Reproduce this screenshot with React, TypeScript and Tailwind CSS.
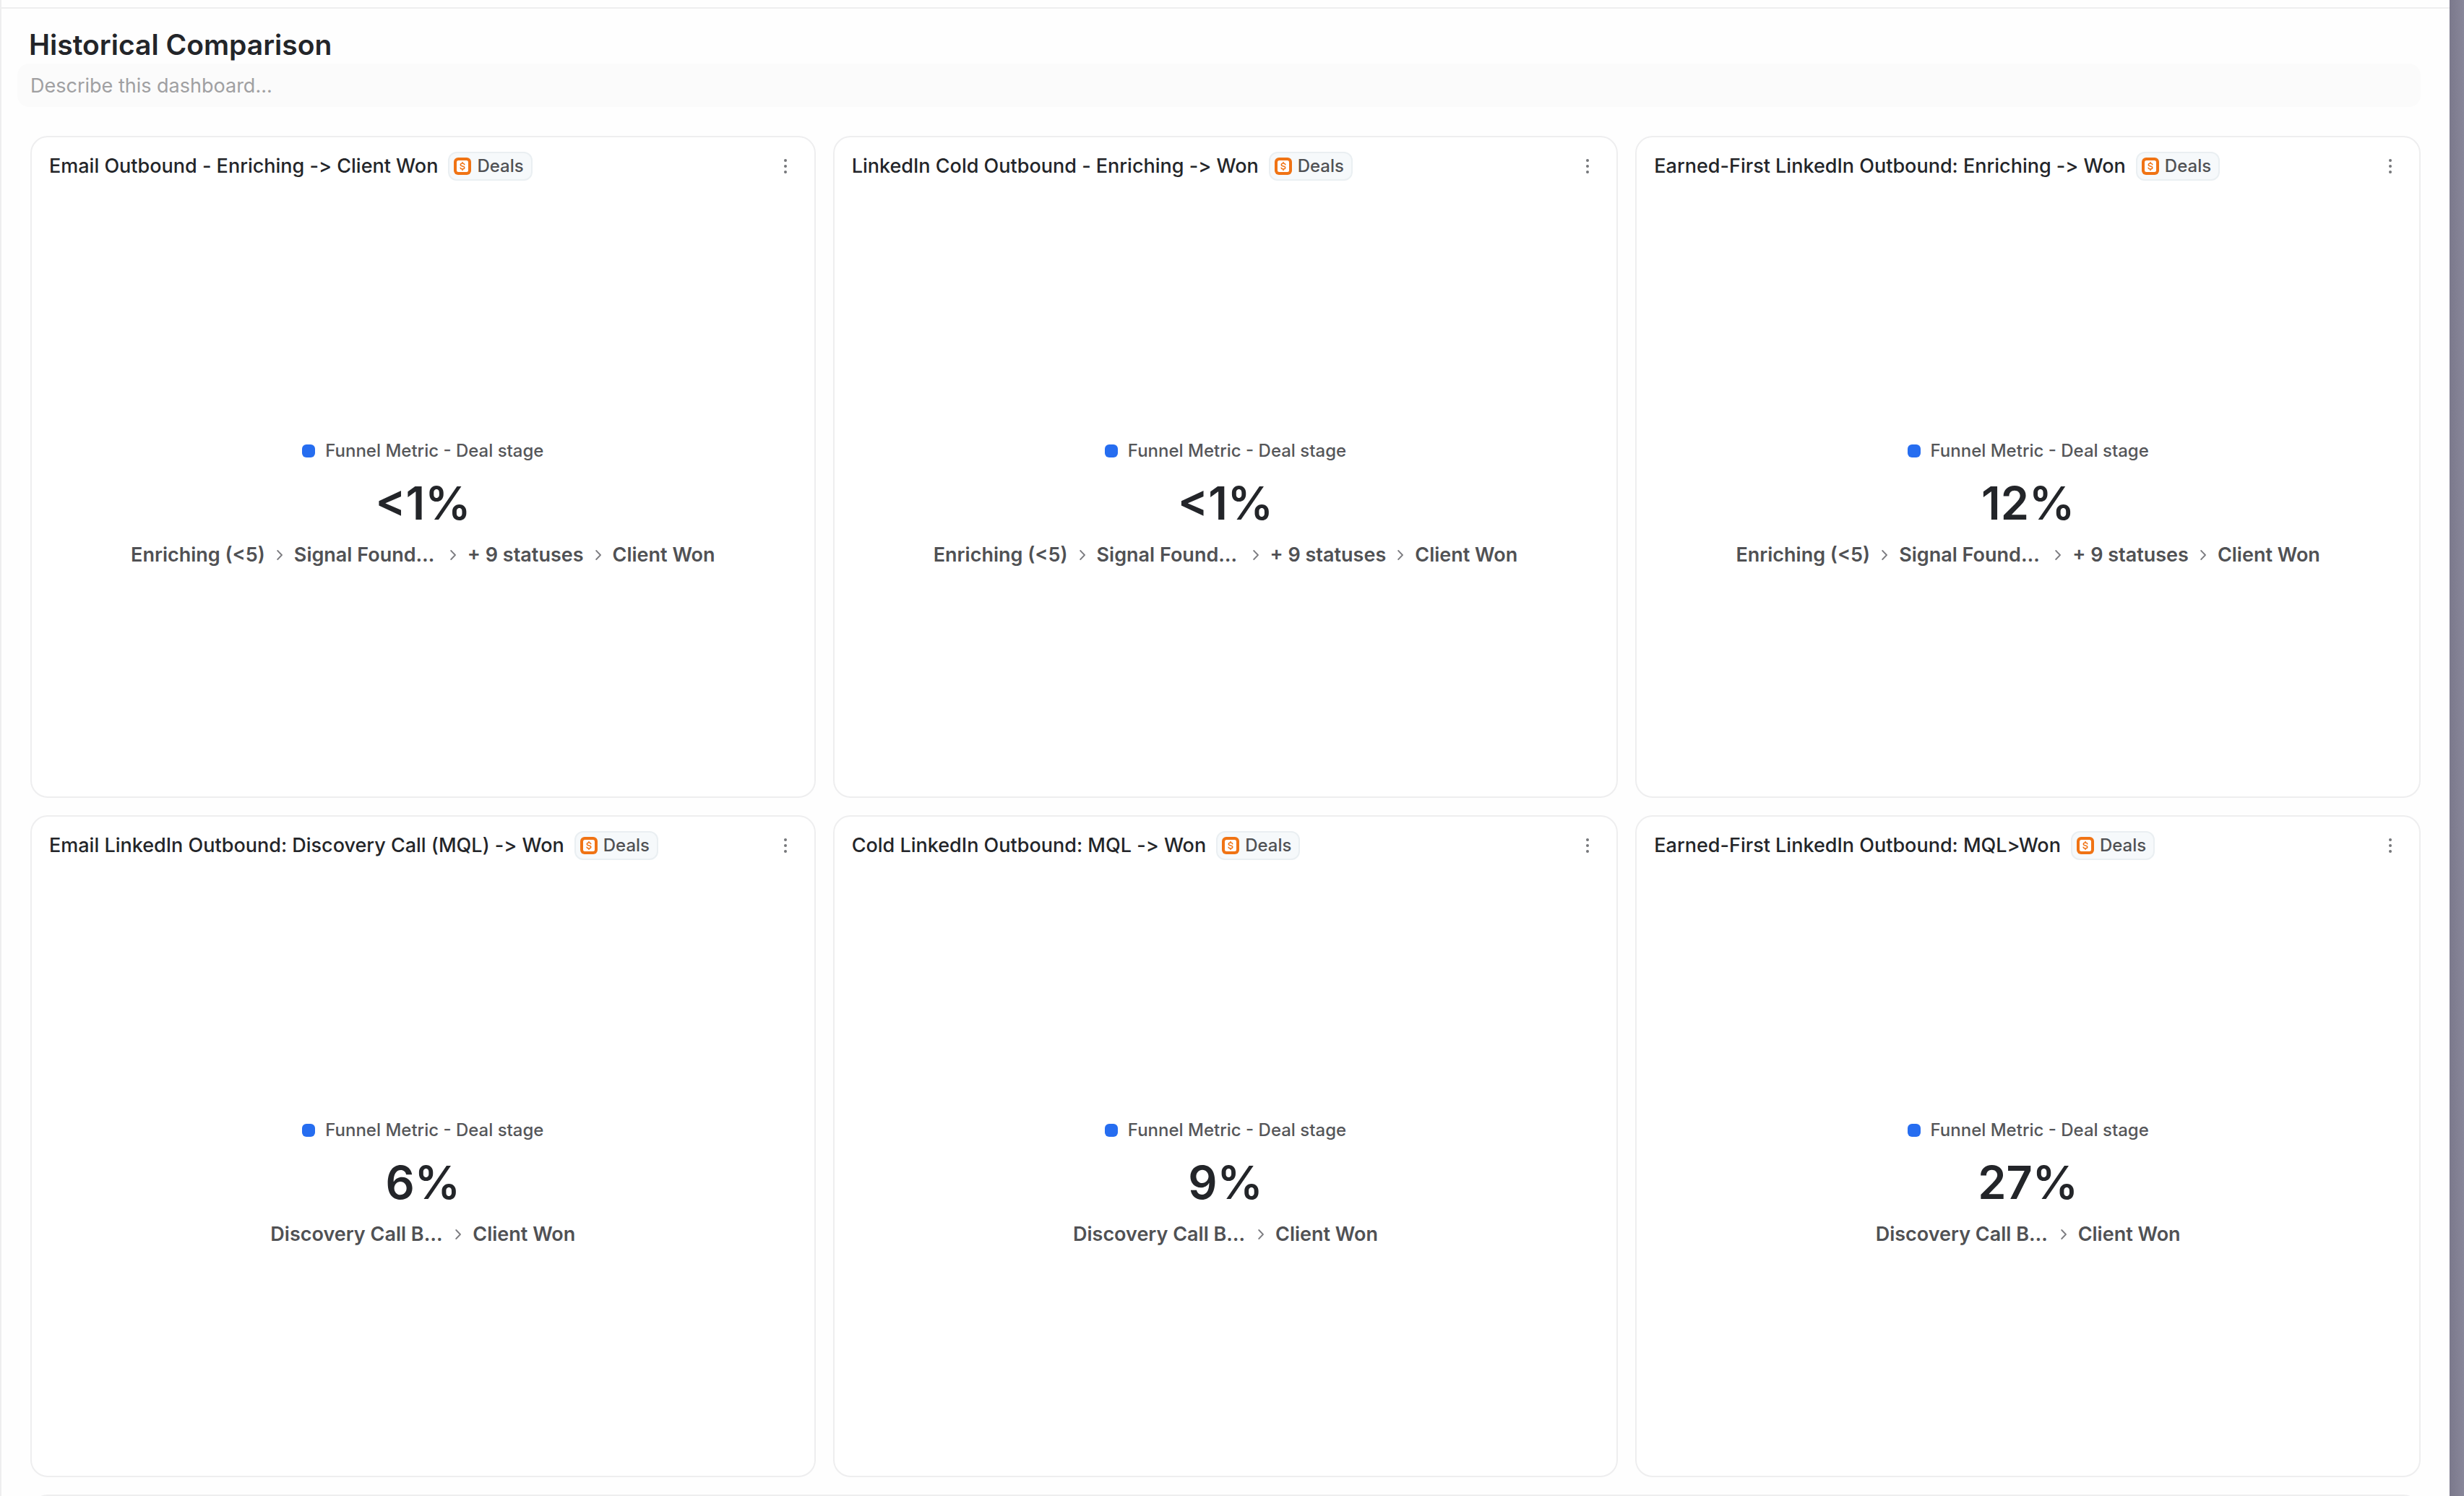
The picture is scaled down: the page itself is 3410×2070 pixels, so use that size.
import { useState } from "react";

type Widget = {
  title: string;
  value: string;
  steps: string[];
};

const fullFunnel = ["Enriching (<5)", "Signal Found…", "+ 9 statuses", "Client Won"];
const callFunnel = ["Discovery Call B…", "Client Won"];

const widgets: Widget[] = [
  { title: "Email Outbound - Enriching -> Client Won", value: "<1%", steps: fullFunnel },
  { title: "LinkedIn Cold Outbound - Enriching -> Won", value: "<1%", steps: fullFunnel },
  { title: "Earned-First LinkedIn Outbound: Enriching -> Won", value: "12%", steps: fullFunnel },
  { title: "Email LinkedIn Outbound: Discovery Call (MQL) -> Won", value: "6%", steps: callFunnel },
  { title: "Cold LinkedIn Outbound: MQL -> Won", value: "9%", steps: callFunnel },
  { title: "Earned-First LinkedIn Outbound: MQL>Won", value: "27%", steps: callFunnel },
];

const DealsIcon = () => (
  <svg viewBox="0 0 24 24" className="size-6 shrink-0" aria-hidden="true">
    <rect width="24" height="24" rx="6" fill="#f07314" />
    <rect x="4" y="4" width="16" height="16" rx="2.5" fill="#fff" />
    <path
      d="M14.8 9.8c-.3-1-1.300-1.700-2.800-1.700-1.600 0-2.700.7-2.700 1.900 0 2.800 5.500 1.200 5.500 4 0 1.200-1.200 1.900-2.800 1.900-1.600 0-2.600-.6-2.900-1.700M12 6.600v1.500M12 15.900v1.500"
      fill="none"
      stroke="#f07314"
      strokeWidth="1.500"
      strokeLinecap="round"
    />
  </svg>
);

const Chevron = () => (
  <svg viewBox="0 0 24 24" className="size-6 shrink-0" aria-hidden="true">
    <path
      d="M9.200 6l5.800 6-5.800 6"
      fill="none"
      stroke="#7c7c80"
      strokeWidth="1.800"
      strokeLinecap="round"
      strokeLinejoin="round"
    />
  </svg>
);

// 切り詰められたラベルは固定幅の枠に入れる
const stepWidth = (step: string) => {
  if (step.startsWith("Signal")) return "w-[200px]";
  if (step.startsWith("Discovery")) return "w-[240px]";
  return "";
};

const WidgetCard = ({ widget }: { widget: Widget }) => (
  <article className="flex h-[916px] flex-col rounded-3xl border-2 border-[#eeeeef] bg-white">
    <header className="flex h-20 items-center gap-3.5 pl-6 pr-5">
      <h2 className="text-[27px] font-medium leading-10 text-[#232529] [font-feature-settings:'calt'_0]">
        {widget.title}
      </h2>
      <span className="flex h-10 items-center gap-2 rounded-xl border-2 border-[#eaeff2] bg-[#f6f9fb] pl-1.5 pr-2.5 text-2xl font-medium text-[#505154]">
        <DealsIcon />
        Deals
      </span>
      <button
        type="button"
        aria-label={`Options for ${widget.title}`}
        className="ml-auto flex size-10 items-center justify-center"
      >
        <svg viewBox="0 0 24 24" className="size-6" fill="#75777a" aria-hidden="true">
          <circle cx="12" cy="4" r="2" />
          <circle cx="12" cy="12" r="2" />
          <circle cx="12" cy="20" r="2" />
        </svg>
      </button>
    </header>

    <div className="flex flex-1 flex-col items-center justify-center pt-6">
      <p className="flex items-center gap-3.5 text-2xl font-medium leading-8 text-[#555659]">
        <span className="size-[18px] rounded-md bg-[#266df0]" />
        Funnel Metric - Deal stage
      </p>
      <p className="mt-4 text-[63px] font-semibold leading-20 text-[#232529]">{widget.value}</p>
      <ol className="mt-3 flex items-center gap-2 text-[27px] font-semibold leading-10 text-[#505154]">
        {widget.steps.map((step, index) => (
          <li key={step} className="flex items-center gap-2">
            {index > 0 && <Chevron />}
            <span className={`whitespace-nowrap ${stepWidth(step)}`}>{step}</span>
          </li>
        ))}
      </ol>
    </div>
  </article>
);

const App = () => {
  const [description, setDescription] = useState("");

  return (
    <div className="flex h-screen overflow-hidden bg-[#fefefe] font-['Inter',sans-serif]">
      <main className="flex min-w-0 flex-1 flex-col border-l-2 border-[#eeeeef]">
        <div className="h-3 shrink-0 border-b-2 border-[#eeeeef]" />
        <div className="flex flex-col pl-5.5 pr-10 pt-6">
          <h1 className="pl-4 text-[39px] font-semibold leading-[52px] text-[#232529]">
            Historical Comparison
          </h1>
          <input
            type="text"
            aria-label="Dashboard description"
            placeholder="Describe this dashboard..."
            value={description}
            onChange={(e) => setDescription(e.target.value)}
            className="h-[60px] w-full rounded-2xl bg-[#fbfbfb] px-4.5 text-[27px] text-[#232529] outline-none placeholder:text-[#a0a0a2]"
          />
          <div className="mt-10 grid grid-cols-3 gap-6 pl-4.5">
            {widgets.map((widget) => (
              <WidgetCard key={widget.title} widget={widget} />
            ))}
            <div className="col-span-3 h-[916px] rounded-3xl border-2 border-[#eeeeef] bg-white" />
          </div>
        </div>
      </main>
      <div className="w-5 shrink-0 bg-linear-to-r from-[#7b798c] to-[#888699]" />
    </div>
  );
};

export default App;
